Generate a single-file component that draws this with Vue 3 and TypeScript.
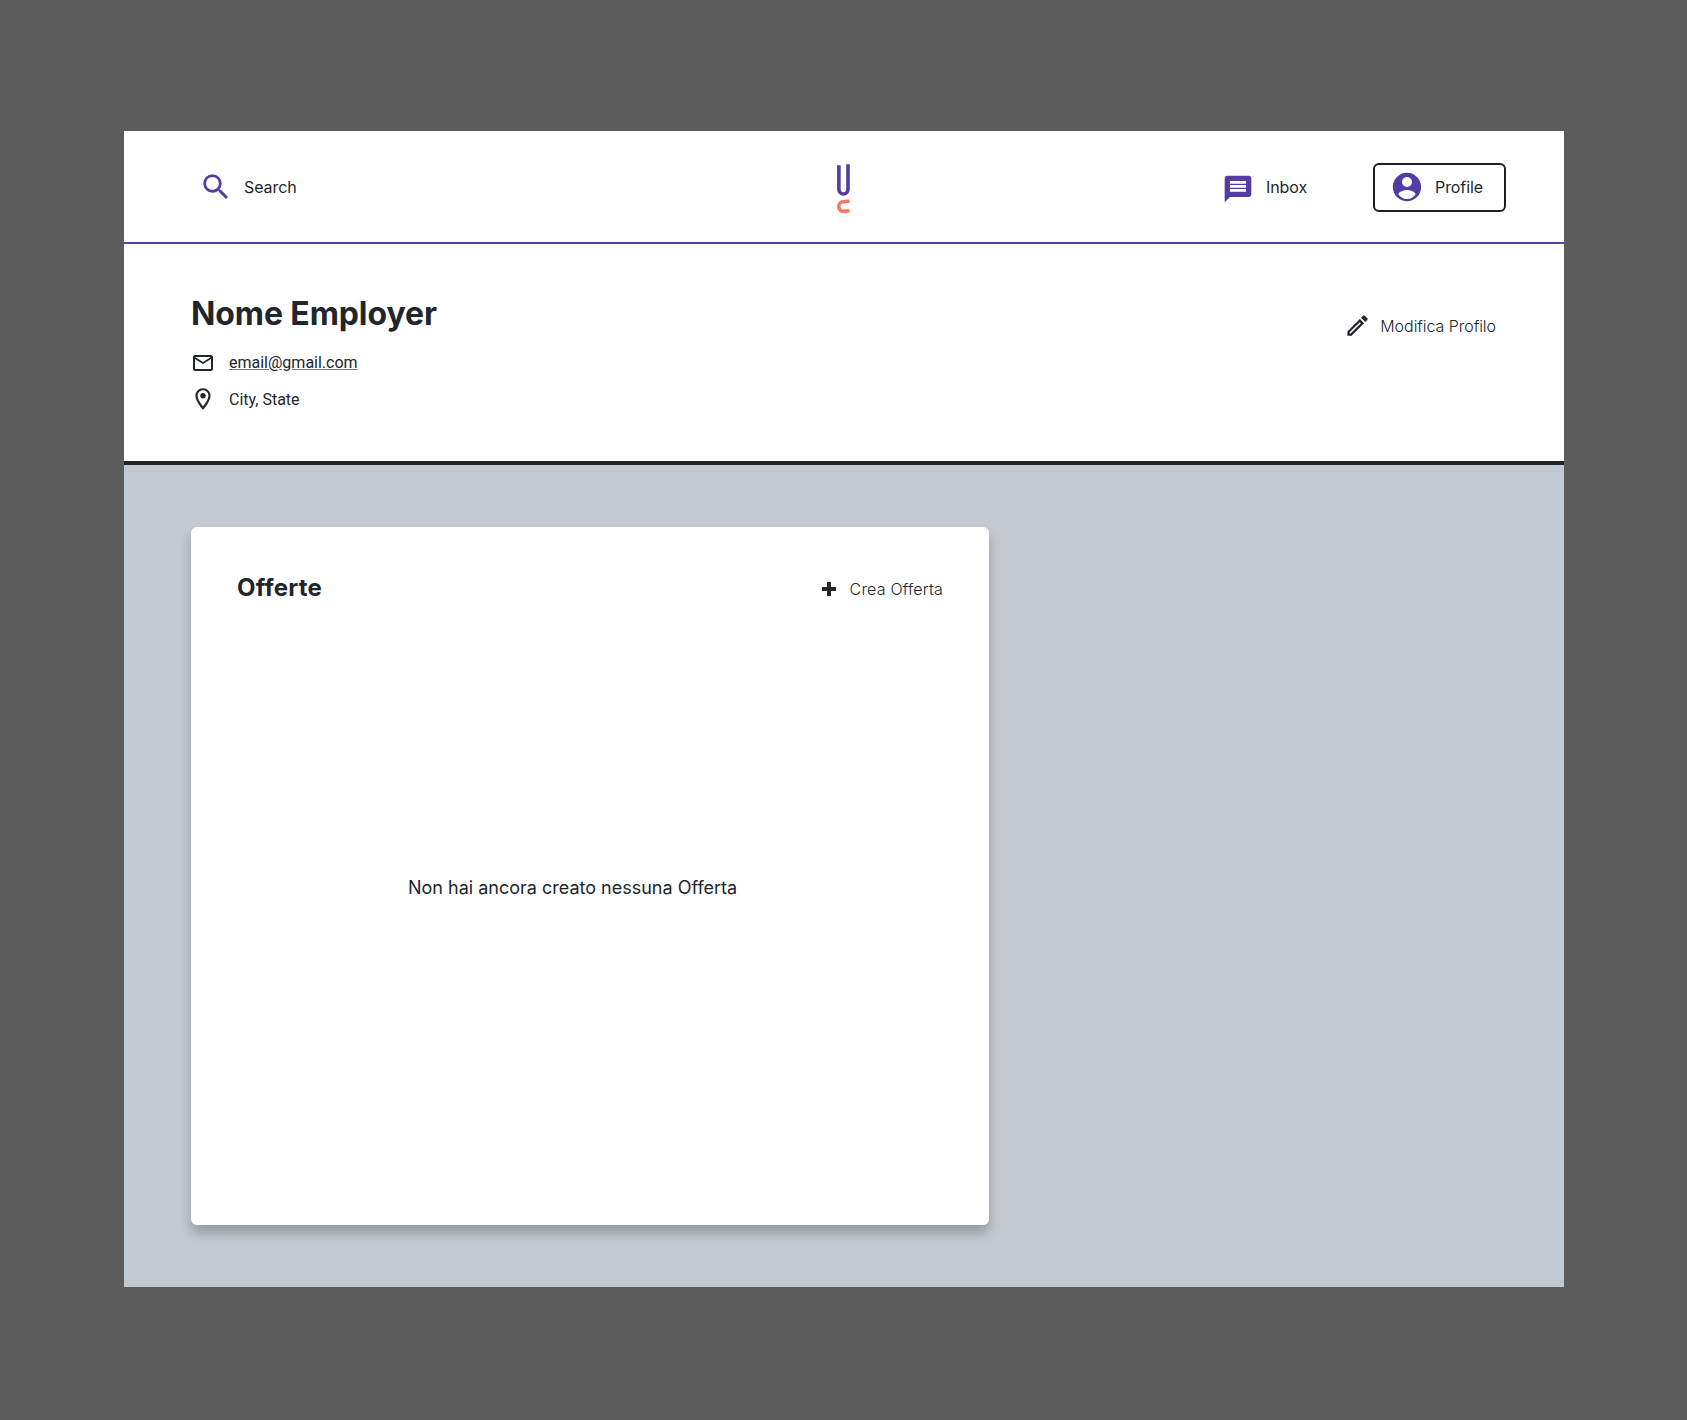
<script setup lang="ts">
const userName: string = 'Nome Employer'
const email: string = 'email@gmail.com'
const place: string = 'City, State'
</script>

<template>
  <div class="backdrop">
    <main class="frame">
      <header class="topbar">
        <a class="nav search">
          <svg width="34" height="34" viewBox="0 0 24 24"><path d="M15.5 14h-.79l-.28-.27A6.471 6.471 0 0 0 16 9.5 6.5 6.5 0 1 0 9.5 16c1.61 0 3.09-.59 4.23-1.57l.27.28v.79l5 4.99L20.49 19l-4.99-5zm-6 0C7.01 14 5 11.99 5 9.5S7.01 5 9.5 5 14 7.01 14 9.5 11.99 14 9.5 14z" /></svg>
          <span>Search</span>
        </a>
        <svg class="logo" width="16" height="52" viewBox="0 0 16 52" fill="none" stroke-width="3.6">
          <path stroke="#533da3" d="M2.900 2.200V26.200a4.500 4.700 0 0 0 9.100 0V1.200" />
          <path stroke="#fb7660" d="M13.600 38 7.200 38.800a4.600 4.600 0 0 0 .5 9.500L13.600 47.700" />
        </svg>
        <a class="nav inbox">
          <svg width="32" height="32" viewBox="0 0 24 24"><path d="M20 2H4c-1.1 0-1.99.9-1.99 2L2 22l4-4h14c1.1 0 2-.9 2-2V4c0-1.1-.9-2-2-2zm-2 12H6v-2h12v2zm0-3H6V9h12v2zm0-3H6V6h12v2z" /></svg>
          <span>Inbox</span>
        </a>
        <a class="nav profile">
          <svg width="34" height="34" viewBox="0 0 24 24"><path d="M12 2C6.48 2 2 6.48 2 12s4.48 10 10 10 10-4.48 10-10S17.52 2 12 2zm0 3c1.93 0 3.5 1.57 3.5 3.5S13.930 12 12 12s-3.500-1.570-3.500-3.500S10.070 5 12 5zm0 15.500c-2.500 0-4.710-1.280-6-3.220.03-1.990 4-3.080 6-3.080 1.990 0 5.970 1.090 6 3.080-1.290 1.940-3.500 3.220-6 3.220z" /></svg>
          <span>Profile</span>
        </a>
      </header>

      <section class="summary">
        <div class="identity">
          <h1>{{ userName }}</h1>
          <div class="detail">
            <svg width="24" height="24" viewBox="0 0 24 24"><path d="M22 6c0-1.100-.9-2-2-2H4c-1.100 0-2 .9-2 2v12c0 1.100.9 2 2 2h16c1.100 0 2-.9 2-2V6zm-2 0-8 5-8-5h16zm0 12H4V8l8 5 8-5v10z" /></svg>
            <a class="mail">{{ email }}</a>
          </div>
          <div class="detail place">
            <svg width="26" height="26" viewBox="0 0 24 24"><path d="M12 2C8.130 2 5 5.130 5 9c0 5.250 7 13 7 13s7-7.750 7-13c0-3.870-3.130-7-7-7zM7 9c0-2.760 2.240-5 5-5s5 2.240 5 5c0 2.880-2.880 7.190-5 9.880C9.920 16.210 7 11.850 7 9z" /><circle cx="12" cy="9" r="2.500" /></svg>
            <span>{{ place }}</span>
          </div>
        </div>
        <a class="edit">
          <svg width="27" height="27" viewBox="0 0 24 24"><path fill-rule="evenodd" d="M3 17.250V21h3.750L17.810 9.940l-3.750-3.750L3 17.250zM5.900 19H5v-.9l9.060-9.080.92.92L5.900 19zM20.710 5.630l-2.340-2.340a1 1 0 0 0-1.410 0l-1.830 1.830 3.750 3.750 1.830-1.830a1 1 0 0 0 0-1.410z" /></svg>
          <span>Modifica Profilo</span>
        </a>
      </section>

      <section class="content">
        <article class="card">
          <div class="card-head">
            <h2>Offerte</h2>
            <a class="create">
              <svg width="14" height="14" viewBox="0 0 14 14"><path d="M5 0h4v5h5v4H9v5H5V9H0V5h5z" /></svg>
              <span>Crea Offerta</span>
            </a>
          </div>
          <p class="empty">Non hai ancora creato nessuna Offerta</p>
        </article>
      </section>
    </main>
  </div>
</template>

<style>
body {
  background: #5c5c5c;
}
</style>

<style scoped>
.backdrop {
  box-sizing: border-box;
  height: 1420px;
  padding: 131px 123px 0 124px;
  background: #5c5c5c;
  color: #21262c;
  font-family: Inter, "Liberation Sans", sans-serif;
  font-size: 16px;
  line-height: 24px;
}
.frame {
  display: flex;
  flex-direction: column;
  width: 1440px;
  height: 1156px;
  background: #fff;
}
svg {
  display: block;
  flex: none;
  fill: currentColor;
}
.topbar {
  box-sizing: border-box;
  display: flex;
  height: 113px;
  border-bottom: 2px solid #533da3;
}
.nav {
  display: flex;
  align-items: center;
}
.nav svg {
  fill: #533da3;
}
.nav span {
  white-space: nowrap;
  letter-spacing: -0.08px;
}
.search {
  width: 637px;
  margin-left: 75px;
}
.search svg {
  margin-right: 11px;
}
.logo {
  margin: 32px 0 0;
  fill: none;
}
.inbox {
  margin-left: 370px;
  width: 151px;
}
.inbox svg {
  margin: 4px 12px 0 0;
}
.profile {
  box-sizing: border-box;
  width: 133px;
  height: 49px;
  margin-top: 32px;
  padding: 0 0 1px 15px;
  border: 2px solid #1c1e1f;
  border-radius: 6px;
}
.profile svg {
  margin-right: 11px;
}
.summary {
  box-sizing: border-box;
  display: flex;
  justify-content: space-between;
  height: 221px;
  padding: 50px 68px 0 67px;
  border-bottom: 4px solid #21252b;
}
h1 {
  margin: 0;
  font-size: 32px;
  line-height: 40px;
  font-weight: 700;
  letter-spacing: -0.1px;
}
.detail {
  display: flex;
  align-items: center;
  gap: 14px;
  height: 24px;
  margin-top: 17px;
  font-family: Roboto, sans-serif;
}
.place {
  gap: 13px;
  margin: 12px 0 0 -1px;
}
.place span {
  padding-top: 2px;
}
.mail {
  text-decoration: underline;
  text-decoration-color: #777a80;
}
.edit {
  display: flex;
  align-items: center;
  gap: 9px;
  height: 26px;
  margin-top: 19px;
  font-weight: 300;
  letter-spacing: -0.04px;
}
.edit svg {
  margin-bottom: 2px;
}
.content {
  flex: 1;
  padding: 62px 67px;
  background: #c3c9d1;
}
.card {
  width: 798px;
  height: 698px;
  border-radius: 6px;
  background: #fff;
  box-shadow: 0 8px 12px rgba(0, 0, 0, 0.23);
}
.card-head {
  display: flex;
  justify-content: space-between;
  padding: 44px 46px 0;
}
h2 {
  margin: 1px 0 0;
  font-size: 24px;
  line-height: 32px;
  font-weight: 700;
  letter-spacing: 0.22px;
}
.create {
  display: flex;
  align-items: center;
  gap: 14px;
  height: 36px;
  font-weight: 300;
  letter-spacing: 0.19px;
}
.empty {
  margin: 269px 0 0 217px;
  font-size: 18px;
  line-height: 24px;
}
</style>
